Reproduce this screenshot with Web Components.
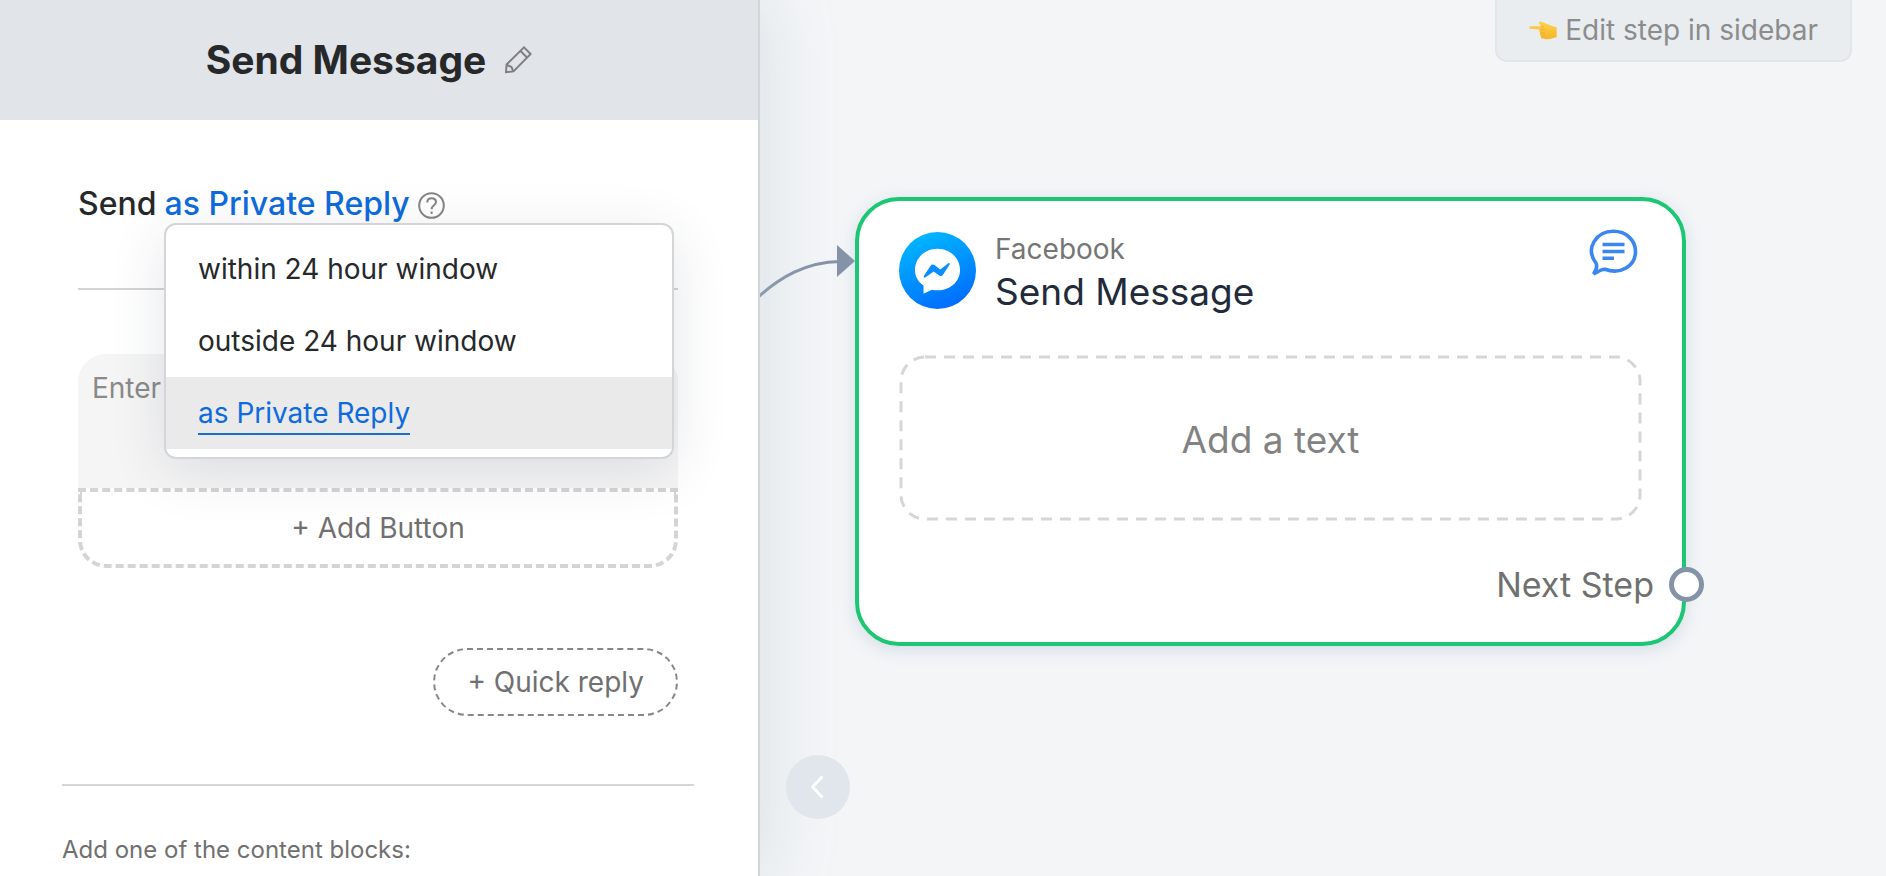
<!DOCTYPE html>
<html lang="en">
<head>
<meta charset="utf-8">
<title>Send Message</title>
<style>
    html, body{
        margin: 0;
        height: 100%;
    }

    body{
        display: flex;
        overflow: hidden;
        background: #f3f5f7;
        color: #26282a;
        font-family: Inter, "Liberation Sans", sans-serif;
        font-size: 28px;
        line-height: 36px;
    }
</style>
</head>
<body>
    <step-sidebar heading="Send Message">
        <send-mode selected="as Private Reply"></send-mode>
        <text-block></text-block>
        <quick-reply></quick-reply>
        <span slot="footer">Add one of the content blocks:</span>
    </step-sidebar>
    <flow-canvas>
        <edit-hint slot="hint">Edit step in sidebar</edit-hint>
        <flow-node channel="Facebook" heading="Send Message">
            <span slot="content">Add a text</span>
            <span slot="next">Next Step</span>
        </flow-node>
    </flow-canvas>

<script>
// shared by every component
var base = `
    *{
        box-sizing: border-box;
    }

    button{
        margin: 0;
        padding: 0;
        border: none;
        background: none;
        color: inherit;
        font: inherit;
        cursor: pointer;
    }

    svg{
        display: block;
    }
`;

class StepSidebar extends HTMLElement {
    connectedCallback(){
        const heading = this.getAttribute('heading');
        const shadow = this.attachShadow({ mode: 'open' });
        shadow.innerHTML = `
<style>` + base + `
    :host{
        display: flex;
        flex-direction: column;
        flex: 0 1 760px;
        box-sizing: border-box;
        position: relative;
        z-index: 1;
        background: #fff;
        border-right: 2px solid #d3d5d9;
        box-shadow: 0 0 64px rgba(170, 190, 200, 0.4);
    }

    header{
        display: flex;
        align-items: center;
        justify-content: center;
        gap: 18px;
        height: 120px;
        padding-right: 20px;
        background: #e1e4e9;
    }

    h1{
        margin: 0;
        font-size: 39px;
        line-height: 48px;
        font-weight: 700;
    }

    .content{
        display: flex;
        flex-direction: column;
        padding: 64px 80px 68px 78px;
    }

    footer{
        margin: 0 64px 0 62px;
        padding-top: 48px;
        border-top: 2px solid #d6d6d6;
        font-size: 24px;
        line-height: 32px;
        color: #707070;
    }
</style>
<header>
    <h1>` + heading + `</h1>
    <button aria-label="Rename step">
        <svg width="28" height="28" viewBox="0 0 28 28" fill="none" stroke="#7d7f82" stroke-width="2">
            <path d="M2 26.200 L2.600 18.500 L20 1.400 L26.600 8 L9.500 25.400 Z M16.500 5 L23 11.500 M2.800 18.800 L7.500 21 L9.200 25.200"/>
        </svg>
    </button>
</header>
<div class="content"><slot></slot></div>
<footer><slot name="footer"></slot></footer>
`;
    }
}

class SendMode extends HTMLElement {
    connectedCallback(){
        const selected = this.getAttribute('selected');
        const modes = ['within 24 hour window', 'outside 24 hour window', 'as Private Reply'];
        var items = '';
        for (const mode of modes){
            const on = mode == selected;
            items += `<button role="option" aria-selected="` + on + `"><span>` + mode + `</span></button>`;
        }
        const shadow = this.attachShadow({ mode: 'open' });
        shadow.innerHTML = `
<style>` + base + `
    :host{
        display: block;
        position: relative;
        z-index: 2;
        padding-bottom: 64px;
        border-bottom: 2px solid #d4d4d4;
        margin-bottom: 64px;
    }

    .line{
        display: flex;
        align-items: center;
        gap: 8px;
        font-size: 32px;
        line-height: 40px;
        font-weight: 500;
    }

    .current{
        color: #0f6bdc;
    }

    .help{
        padding-top: 2px;
    }

    /* opened list, lies over the blocks below */
    .menu{
        position: absolute;
        top: 39px;
        left: 86px;
        right: 4px;
        padding: 8px 0;
        background: #fff;
        border: 2px solid #d4d5d7;
        border-radius: 12px;
        box-shadow: 0 12px 56px rgba(40, 50, 80, 0.12);
    }

    .menu button{
        display: block;
        width: 100%;
        height: 72px;
        padding: 2px 32px 0;
        text-align: left;
    }

    .menu span{
        display: inline-block;
        border-bottom: 2px solid transparent;
        line-height: 40px;
    }

    .menu [aria-selected="true"]{
        background: #eaeaea;
        color: #0f6bdc;
    }

    .menu [aria-selected="true"] span{
        border-color: #1a6fc4;
    }
</style>
<div class="line">
    <span>Send</span>
    <button class="current" aria-haspopup="listbox" aria-expanded="true">` + selected + `</button>
    <button class="help" aria-label="Help">
        <svg width="27" height="27" viewBox="0 0 27 27" fill="none" stroke="#868686" stroke-width="2">
            <circle cx="13.500" cy="13.500" r="12.300"/>
            <path d="M9.300 10.400 C9.300 4.700 18 4.900 18 10 C18 13.400 13.600 13.200 13.600 17.300"/>
            <path d="M13.600 19.500 V22"/>
        </svg>
    </button>
</div>
<div class="menu" role="listbox">` + items + `</div>
`;
    }
}

class TextBlock extends HTMLElement {
    connectedCallback(){
        const shadow = this.attachShadow({ mode: 'open' });
        shadow.innerHTML = `
<style>` + base + `
    :host{
        display: flex;
        flex-direction: column;
        margin-bottom: 80px;
    }

    textarea{
        display: block;
        height: 134px;
        margin: 0;
        padding: 16px 14px;
        border: none;
        outline: none;
        resize: none;
        border-radius: 28px 28px 0 0;
        background: #f5f5f5;
        font: inherit;
    }

    textarea::placeholder{
        color: #8a8a8a;
    }

    button{
        height: 80px;
        border: 4px dashed #d4d4d4;
        border-radius: 0 0 28px 28px;
        color: #707070;
    }
</style>
<textarea placeholder="Enter" aria-label="Message text"></textarea>
<button>+ Add Button</button>
`;
    }
}

class QuickReply extends HTMLElement {
    connectedCallback(){
        const shadow = this.attachShadow({ mode: 'open' });
        shadow.innerHTML = `
<style>` + base + `
    :host{
        display: flex;
        justify-content: flex-end;
    }

    button{
        height: 68px;
        padding: 0 32px;
        border: 2px dashed #868686;
        border-radius: 34px;
        color: #707070;
    }
</style>
<button>+ Quick reply</button>
`;
    }
}

class FlowCanvas extends HTMLElement {
    connectedCallback(){
        const shadow = this.attachShadow({ mode: 'open' });
        shadow.innerHTML = `
<style>` + base + `
    :host{
        display: flex;
        flex-direction: column;
        flex: 1 1 0;
        position: relative;
    }

    .hint{
        display: flex;
        justify-content: flex-end;
        padding-right: 34px;
        margin-bottom: 135px;
    }

    .nodes{
        padding: 0 200px 0 95px;
    }

    .edge{
        position: absolute;
        top: 240px;
        left: 0;
    }

    .back{
        position: absolute;
        z-index: 2;
        left: 26px;
        bottom: 57px;
        display: flex;
        align-items: center;
        justify-content: center;
        width: 64px;
        height: 64px;
        border-radius: 50%;
        background: #e1e5ec;
    }
</style>
<div class="hint"><slot name="hint"></slot></div>
<svg class="edge" width="96" height="60" viewBox="0 0 96 60">
    <path d="M-4 59 C20 37 46 22 80 21.500" fill="none" stroke="#8593a8" stroke-width="3"/>
    <path d="M77 5 L95 21 L77 37 Z" fill="#8593a8"/>
</svg>
<div class="nodes"><slot></slot></div>
<button class="back" aria-label="Back">
    <svg width="14" height="24" viewBox="0 0 14 24" fill="none" stroke="#fff" stroke-width="3">
        <path d="M11.500 1.500 L1.500 12 L11.500 22.500"/>
    </svg>
</button>
`;
    }
}

class EditHint extends HTMLElement {
    connectedCallback(){
        const shadow = this.attachShadow({ mode: 'open' });
        shadow.innerHTML = `
<style>` + base + `
    :host{
        display: block;
    }

    button{
        display: flex;
        align-items: center;
        gap: 8px;
        height: 62px;
        padding: 0 32px;
        background: #e9edf0;
        border: 2px solid #e1e5ed;
        border-top: none;
        border-radius: 0 0 12px 12px;
        color: #8c8c8c;
    }
</style>
<button>
    <svg width="28" height="19" viewBox="0 0 28 19">
        <defs>
            <linearGradient id="skin" x1="0" y1="0" x2="0" y2="1">
                <stop offset="0" stop-color="#ffd148"/>
                <stop offset="1" stop-color="#f5b52c"/>
            </linearGradient>
        </defs>
        <path fill="url(#skin)" d="M1.500 5.200 L12 5.300 L10.200 2.700 C9.300 1 11 .2 12.600 .8 L18.500 3.200 C21 4.300 23.500 5.300 27.600 6.200 L27.800 16 C24 17 21 18.500 17 18.200 L13.500 17.600 C11.600 17.200 11.400 15.700 12.200 14.800 C10.500 14.200 10.300 12.600 11.200 11.600 C9.900 10.800 10 9.300 11 8.500 L1.500 7.700 C-.2 7.400 -.2 5.400 1.500 5.200 Z"/>
        <path fill="none" stroke="#e9a52b" stroke-width="0.700" d="M11 8.500 L15.500 8.800 M11.400 11.700 L15.800 12 M12.300 14.900 L16 15.200 M12 5.300 L15 6.300"/>
    </svg>
    <span><slot></slot></span>
</button>
`;
    }
}

class FlowNode extends HTMLElement {
    connectedCallback(){
        const channel = this.getAttribute('channel');
        const heading = this.getAttribute('heading');
        const shadow = this.attachShadow({ mode: 'open' });
        shadow.innerHTML = `
<style>` + base + `
    :host{
        display: block;
        box-sizing: border-box;
        padding: 31px 40px 35px 40px;
        background: #fff;
        border: 4px solid #1bc772;
        border-radius: 44px;
        box-shadow: 0 4px 16px rgba(130, 150, 190, 0.25);
    }

    /* as high as the logo, the titles hang a little below it */
    header{
        display: flex;
        align-items: flex-start;
        gap: 19px;
        height: 77px;
        margin-bottom: 46px;
    }

    .titles{
        flex: 1;
    }

    .channel{
        color: #757575;
        font-size: 28px;
        line-height: 34px;
    }

    h2{
        margin: 0;
        color: #232b3a;
        font-size: 37px;
        line-height: 52px;
        font-weight: 400;
    }

    .content{
        display: grid;
        grid-template-rows: 166px;
        align-items: center;
        width: 100%;
        color: #828282;
        font-size: 37px;
    }

    .outline, .label{
        grid-area: 1 / 1;
    }

    .label{
        padding-top: 4px;
    }

    .outline{
        width: 100%;
        height: 166px;
    }

    .outline rect{
        x: 2px;
        y: 2px;
        width: calc(100% - 4px);
        height: calc(100% - 4px);
        rx: 24px;
        fill: none;
        stroke: #d6d6d6;
        stroke-width: 3px;
        stroke-dasharray: 11px 8px;
    }

    /* the port sits on the card's border */
    .next{
        display: flex;
        align-items: center;
        justify-content: flex-end;
        gap: 15px;
        margin: 40px -62px 0 0;
        color: #707070;
        font-size: 34px;
        line-height: 44px;
    }

    .next-label{
        padding-top: 2px;
    }

    .port{
        width: 35px;
        height: 35px;
        border: 5px solid #8593a8;
        border-radius: 50%;
        background: #fff;
    }
</style>
<header>
    <svg width="77" height="77" viewBox="0 0 77 77">
        <defs>
            <linearGradient id="messenger" x1="0.300" y1="0" x2="0.700" y2="1">
                <stop offset="0" stop-color="#00b8ff"/>
                <stop offset="1" stop-color="#006aff"/>
            </linearGradient>
        </defs>
        <circle cx="38.500" cy="38.500" r="38.500" fill="url(#messenger)"/>
        <path fill="#fff" d="M38.500 16.800 C26 16.800 16 26 16 38 C16 44.500 19 49.800 24.500 53.600 L24.500 61.800 L33 57.700 C48 60.800 61 51.500 61 38 C61 26 51 16.800 38.500 16.800 Z"/>
        <path fill="#0a8dff" d="M25 43.800 L31.600 33.700 C32.500 32.200 34 32 35.400 33 L41.300 37.400 L49.300 31.200 C50.400 30.500 51.300 31.400 50.600 32.500 L44 42.800 C43.100 44.200 41.600 44.500 40.200 43.500 L34.600 39.400 L26.300 45.400 C25.100 46.100 24.200 45 25 43.800 Z"/>
    </svg>
    <div class="titles">
        <div class="channel">` + channel + `</div>
        <h2>` + heading + `</h2>
    </div>
    <svg width="53" height="48" viewBox="0 3 53 48" fill="none" stroke="#3b86f0" stroke-width="3.600" overflow="visible">
        <path d="M7.200 34.500 C-4.500 19 7.500 2.300 24.500 2.300 C37 2.300 46.500 11 46.500 22.500 C46.500 37 31.500 46 16 40.200 C13 39.800 9 42.300 4.500 45 C7 41.500 8.500 38 7.200 34.500 Z"/>
        <path d="M13.500 15.500 H35.500 M13.500 22.500 H35.500 M13.500 29.200 H25"/>
    </svg>
</header>
<button class="content">
    <svg class="outline"><rect/></svg>
    <span class="label"><slot name="content"></slot></span>
</button>
<div class="next">
    <span class="next-label"><slot name="next"></slot></span>
    <span class="port"></span>
</div>
`;
    }
}

customElements.define('step-sidebar', StepSidebar);
customElements.define('send-mode', SendMode);
customElements.define('text-block', TextBlock);
customElements.define('quick-reply', QuickReply);
customElements.define('flow-canvas', FlowCanvas);
customElements.define('edit-hint', EditHint);
customElements.define('flow-node', FlowNode);
</script>
</body>
</html>
